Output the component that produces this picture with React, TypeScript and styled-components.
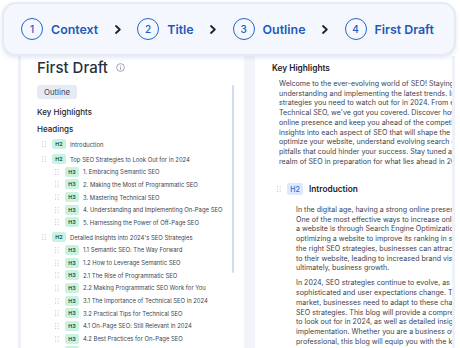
import React from 'react'
import styled, { createGlobalStyle } from 'styled-components'

const GlobalStyle = createGlobalStyle`
  html, body { margin: 0; padding: 0; background: #ffffff; }
  body { font-family: Inter, "Noto Sans", sans-serif; }
`

const Page = styled.div`
  width: 460px;
  height: 348px;
  overflow: hidden;
  display: flex;
  flex-direction: column;
  background: #ffffff;
`

const Stepper = styled.nav`
  flex: none;
  height: 50px;
  margin: 2px 4px 0 2px;
  padding-left: 17px;
  display: flex;
  align-items: center;
  gap: 16.5px;
  border: 2px solid #e5eaf5;
  border-radius: 14px;
  background: #f4f7fd;
  box-shadow: 0 2px 4px rgba(176, 190, 222, 0.35);
  position: relative;
  z-index: 1;
`

const Step = styled.div`
  display: flex;
  align-items: center;
  gap: 8px;
`

const StepNum = styled.span`
  width: 22px;
  height: 22px;
  box-sizing: border-box;
  border: 1.5px solid #2a63c6;
  border-radius: 50%;
  display: flex;
  align-items: center;
  justify-content: center;
  font-size: 10px;
  font-weight: 500;
  color: #2059bd;
`

const StepLabel = styled.span`
  font-size: 12.4px;
  font-weight: 600;
  color: #1f5ab9;
`

const Card = styled.div`
  flex: 1;
  min-height: 0;
  margin: 0 5px 0 18px;
  display: grid;
  grid-template-columns: 223px 11px 1fr;
  border-left: 3px solid #eef1f8;
  border-right: 3px solid #eef1f8;
`

const OutlinePane = styled.section`
  position: relative;
  overflow: hidden;
  padding: 2px 0 0 16px;
  display: flex;
  flex-direction: column;
`

const ScrollThumb = styled.div`
  position: absolute;
  right: 10px;
  top: 29px;
  width: 2px;
  height: 188px;
  border-radius: 1px;
  background: #cfdcf4;
`

const TitleRow = styled.div`
  display: flex;
  align-items: center;
  gap: 8px;
  height: 20px;
`

const Title = styled.h1`
  margin: 0;
  font-size: 15px;
  font-weight: 500;
  color: #27303f;
`

const Tag = styled.span`
  align-self: flex-start;
  margin-top: 8px;
  height: 14px;
  line-height: 14px;
  padding: 0 7px;
  border-radius: 3px;
  background: #e6eaf4;
  color: #3b4660;
  font-size: 7.8px;
`

const SectionLabel = styled.div<{ $gap: number }>`
  margin-top: ${p => p.$gap}px;
  font-size: 8px;
  line-height: 12px;
  font-weight: 500;
  color: #1f2430;
`

const HeadingList = styled.ul`
  list-style: none;
  margin: 1px 0 0;
  padding: 0;
`

const HeadingRow = styled.li<{ $level: number }>`
  height: 12.7px;
  margin-top: ${p => (p.$level === 2 ? 2 : 0)}px;
  padding-left: ${p => (p.$level === 2 ? 5 : 18)}px;
  display: flex;
  align-items: center;
  white-space: nowrap;
`

const Badge = styled.span<{ $tone: 'green' | 'blue' }>`
  flex: none;
  margin-left: 6px;
  width: ${p => (p.$tone === 'green' ? 14 : 16)}px;
  height: ${p => (p.$tone === 'green' ? 10 : 12)}px;
  border-radius: 2px;
  display: flex;
  align-items: center;
  justify-content: center;
  background: ${p => (p.$tone === 'green' ? '#c9f2e1' : '#dce9fc')};
  color: ${p => (p.$tone === 'green' ? '#2d5f4f' : '#2f6fd8')};
  font-size: ${p => (p.$tone === 'green' ? 5.3 : 7)}px;
  font-weight: ${p => (p.$tone === 'green' ? 700 : 500)};
`

const RowText = styled.span`
  margin-left: 4px;
  font-size: 5.9px;
  color: #40454f;
`

const Gutter = styled.div`
  background: #f2f4f9;
`

const DraftPane = styled.section`
  overflow: hidden;
  padding: 6px 0 0 17px;
`

const DraftHeading = styled.div`
  font-size: 8.3px;
  line-height: 12px;
  font-weight: 600;
  color: #20242c;
`

const Paragraph = styled.p<{ $indent: number; $gap: number }>`
  margin: ${p => p.$gap}px 0 0 ${p => p.$indent}px;
  font-size: 7.1px;
  line-height: 9.7px;
  color: #3d424b;
  white-space: nowrap;

  span { display: block; }
`

const SectionRow = styled.div`
  margin: 16.7px 0 0 5px;
  height: 12px;
  display: flex;
  align-items: center;
`

const SectionTitle = styled.span`
  margin-left: 6px;
  font-size: 8.3px;
  font-weight: 600;
  color: #20242c;
`

function Chevron() {
  return (
    <svg width="6" height="9" viewBox="0 0 6 9" fill="none">
      <path d="M1 1l3.8 3.5L1 8" stroke="#1e2128" strokeWidth="1.8" strokeLinecap="round" strokeLinejoin="round" />
    </svg>
  )
}

function InfoIcon() {
  return (
    <svg width="9" height="9" viewBox="0 0 10 10" fill="none">
      <circle cx="5" cy="5" r="4.3" stroke="#8a93a3" strokeWidth="0.9" />
      <path d="M5 4.5v2.6" stroke="#8a93a3" strokeWidth="0.9" strokeLinecap="round" />
      <circle cx="5" cy="3.1" r="0.55" fill="#8a93a3" />
    </svg>
  )
}

function DragHandle() {
  const dots = []
  for (let r = 0; r < 3; r++) {
    for (let c = 0; c < 2; c++) {
      dots.push(<circle key={`${r}-${c}`} cx={0.6 + c * 2.6} cy={0.6 + r * 2.4} r="0.6" fill="#c3c8d1" />)
    }
  }
  return <svg width="4" height="6" viewBox="0 0 4 6" style={{ flex: 'none' }}>{dots}</svg>
}

const steps = ['Context', 'Title', 'Outline', 'First Draft']

const headings: [number, string][] = [
  [2, 'Introduction'],
  [2, 'Top SEO Strategies to Look Out for in 2024'],
  [3, '1. Embracing Semantic SEO'],
  [3, '2. Making the Most of Programmatic SEO'],
  [3, '3. Mastering Technical SEO'],
  [3, '4. Understanding and Implementing On-Page SEO'],
  [3, '5. Harnessing the Power of Off-Page SEO'],
  [2, "Detailed Insights into 2024's SEO Strategies"],
  [3, '1.1 Semantic SEO: The Way Forward'],
  [3, '1.2 How to Leverage Semantic SEO'],
  [3, '2.1 The Rise of Programmatic SEO'],
  [3, '2.2 Making Programmatic SEO Work for You'],
  [3, '3.1 The Importance of Technical SEO in 2024'],
  [3, '3.2 Practical Tips for Technical SEO'],
  [3, '4.1 On-Page SEO: Still Relevant in 2024'],
  [3, '4.2 Best Practices for On-Page SEO'],
  [3, '5.1 Off-Page SEO and Link Building'],
]

const intro = [
  'Welcome to the ever-evolving world of SEO! Staying ahead of the curve requires',
  "understanding and implementing the latest trends. In this blog, we'll explore the top SEO",
  'strategies you need to watch out for in 2024. From embracing Semantic SEO to mastering',
  "Technical SEO, we've got you covered. Discover how these strategies can boost your",
  "online presence and keep you ahead of the competition. We'll provide detailed",
  'insights into each aspect of SEO that will shape the future of digital marketing.',
  'optimize your website, understand evolving search engine algorithms, and avoid common',
  'pitfalls that could hinder your success. Stay tuned as we dive deep into the dynamic',
  'realm of SEO in preparation for what lies ahead in 2024.',
]

const introduction = [
  'In the digital age, having a strong online presence is crucial for businesses.',
  'One of the most effective ways to increase online visibility and attract traffic to',
  'a website is through Search Engine Optimization (SEO). SEO involves',
  'optimizing a website to improve its ranking in search engine results. By implementing',
  'the right SEO strategies, businesses can attract more organic traffic',
  'to their website, leading to increased brand visibility, more leads, and',
  'ultimately, business growth.',
]

const outlook = [
  'In 2024, SEO strategies continue to evolve, as search engines become more',
  'sophisticated and user expectations change. To stay ahead in the competitive',
  'market, businesses need to adapt to these changes and implement effective',
  'SEO strategies. This blog will provide a comprehensive guide to the top SEO strategies',
  'to look out for in 2024, as well as detailed insights into their',
  'implementation. Whether you are a business owner or a digital marketing',
  'professional, this blog will equip you with the knowledge',
]

export default function App() {
  return (
    <Page>
      <GlobalStyle />
      <Stepper>
        {steps.map((label, i) => (
          <React.Fragment key={label}>
            {i > 0 && <Chevron />}
            <Step>
              <StepNum>{i + 1}</StepNum>
              <StepLabel>{label}</StepLabel>
            </Step>
          </React.Fragment>
        ))}
      </Stepper>
      <Card>
        <OutlinePane>
          <TitleRow>
            <Title>First Draft</Title>
            <InfoIcon />
          </TitleRow>
          <Tag>Outline</Tag>
          <SectionLabel $gap={7}>Key Highlights</SectionLabel>
          <SectionLabel $gap={5}>Headings</SectionLabel>
          <HeadingList>
            {headings.map(([level, text], i) => (
              <HeadingRow key={i} $level={level}>
                <DragHandle />
                <Badge $tone="green">H{level}</Badge>
                <RowText>{text}</RowText>
              </HeadingRow>
            ))}
          </HeadingList>
          <ScrollThumb />
        </OutlinePane>
        <Gutter />
        <DraftPane>
          <DraftHeading>Key Highlights</DraftHeading>
          <Paragraph $indent={7} $gap={5}>
            {intro.map(line => <span key={line}>{line}</span>)}
          </Paragraph>
          <SectionRow>
            <DragHandle />
            <Badge $tone="blue">H2</Badge>
            <SectionTitle>Introduction</SectionTitle>
          </SectionRow>
          <Paragraph $indent={24} $gap={10}>
            {introduction.map(line => <span key={line}>{line}</span>)}
          </Paragraph>
          <Paragraph $indent={24} $gap={5.5}>
            {outlook.map(line => <span key={line}>{line}</span>)}
          </Paragraph>
        </DraftPane>
      </Card>
    </Page>
  )
}
